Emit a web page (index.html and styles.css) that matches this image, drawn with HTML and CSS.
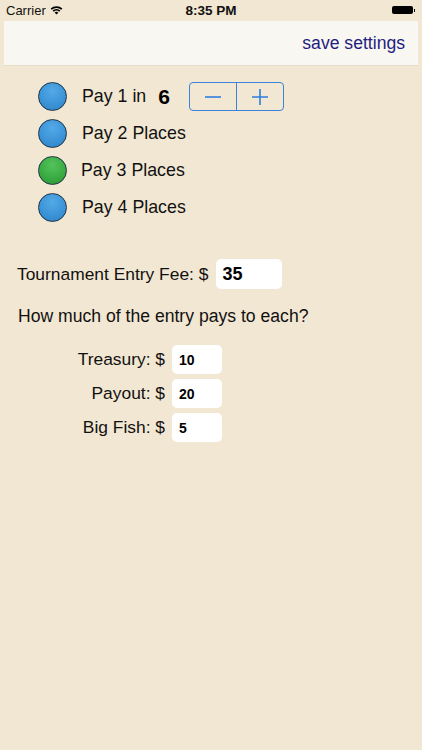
FILE: index.html
```html
<!DOCTYPE html>
<html>
<head>
<meta charset="utf-8">
<link rel="stylesheet" href="styles.css">
</head>
<body>
<div class="screen">
  <div class="status">
    <div class="carrier">Carrier
      <svg class="wifi" width="13" height="10" viewBox="0 0 13 10">
        <path d="M0.6 3.6 A8.5 8.5 0 0 1 12.4 3.6 L11.2 4.8 A6.8 6.8 0 0 0 1.8 4.8 Z" fill="#000"/>
        <path d="M2.6 5.6 A5.6 5.6 0 0 1 10.4 5.6 L9.2 6.8 A3.9 3.9 0 0 0 3.8 6.8 Z" fill="#000"/>
        <path d="M4.6 7.6 A2.7 2.7 0 0 1 8.4 7.6 L6.5 9.6 Z" fill="#000"/>
      </svg>
    </div>
    <div class="time">8:35 PM</div>
    <div class="battery"><span class="cell"></span><span class="nub"></span></div>
  </div>
  <div class="nav">
    <span class="save">save settings</span>
  </div>

  <div class="options">
    <div class="opt">
      <span class="dot blue"></span>
      <span class="opt-label">Pay 1 in</span>
      <span class="count">6</span>
      <div class="stepper">
        <span class="step">
          <svg width="20" height="20" viewBox="0 0 20 20"><path d="M2 10 H18" stroke="#2f7de0" stroke-width="1.6"/></svg>
        </span>
        <span class="step">
          <svg width="20" height="20" viewBox="0 0 20 20"><path d="M2 10 H18 M10 2 V18" stroke="#2f7de0" stroke-width="1.6"/></svg>
        </span>
      </div>
    </div>
    <div class="opt">
      <span class="dot blue"></span>
      <span class="opt-label">Pay 2 Places</span>
    </div>
    <div class="opt">
      <span class="dot green"></span>
      <span class="opt-label shift">Pay 3 Places</span>
    </div>
    <div class="opt">
      <span class="dot blue"></span>
      <span class="opt-label">Pay 4 Places</span>
    </div>
  </div>

  <div class="fee">
    <span class="fee-label">Tournament Entry Fee: $</span>
    <span class="field fee-field">35</span>
  </div>

  <div class="question">How much of the entry pays to each?</div>

  <div class="split">
    <span class="split-label">Treasury: $</span>
    <span class="field small">10</span>
    <span class="split-label">Payout: $</span>
    <span class="field small">20</span>
    <span class="split-label">Big Fish: $</span>
    <span class="field small">5</span>
  </div>
</div>
</body>
</html>
```
FILE: styles.css
```css
html, body {
  margin: 0;
  padding: 0;
}
* {
  box-sizing: border-box;
}
body {
  background: #f2e7d2;
  font-family: "Liberation Sans", Arial, sans-serif;
  color: #111;
}
.screen {
  width: 422px;
  height: 750px;
  background: #f2e7d2;
  overflow: hidden;
}
.status {
  height: 20px;
  display: flex;
  align-items: center;
  justify-content: space-between;
  padding: 0 7px 0 6px;
  font-size: 13px;
  position: relative;
}
.carrier {
  display: flex;
  align-items: center;
  gap: 4px;
  color: #111;
}
.wifi {
  margin-top: -1px;
}
.time {
  position: absolute;
  left: 0;
  right: 0;
  text-align: center;
  font-weight: bold;
  font-size: 13.5px;
  pointer-events: none;
}
.battery {
  display: flex;
  align-items: center;
}
.battery .cell {
  width: 21px;
  height: 8px;
  background: #000;
  border-radius: 2px;
}
.battery .nub {
  width: 1.5px;
  height: 3px;
  background: #000;
  margin-left: 0.5px;
}
.nav {
  margin: 1px 4px 0;
  height: 44px;
  background: #f9f7f2;
  display: flex;
  align-items: center;
  justify-content: flex-end;
  padding-right: 13px;
  box-shadow: 0 1px 0 #e6dcc7;
}
.save {
  font-size: 17.6px;
  color: #1f1d80;
}
.options {
  margin-top: 13px;
  display: flex;
  flex-direction: column;
}
.opt {
  height: 37px;
  display: flex;
  align-items: center;
  padding-left: 38px;
}
.dot {
  width: 29px;
  height: 29px;
  border-radius: 50%;
  border: 1.5px solid #1f3346;
  flex: none;
}
.dot.blue {
  background: radial-gradient(circle at 50% 30%, #54a9e6 0%, #3c95d8 55%, #2d7fc3 100%);
}
.dot.green {
  background: radial-gradient(circle at 50% 30%, #55c25c 0%, #3aac43 55%, #2c8f35 100%);
}
.opt-label {
  font-size: 17.8px;
  margin-left: 15px;
  color: #111;
}
.opt-label.shift {
  margin-left: 14px;
}
.count {
  font-size: 21px;
  font-weight: bold;
  margin-left: 12px;
  color: #000;
}
.stepper {
  margin-left: 19px;
  width: 95px;
  height: 29px;
  border: 1px solid #3b82d9;
  border-radius: 4px;
  display: flex;
}
.step {
  flex: 1;
  display: flex;
  align-items: center;
  justify-content: center;
}
.step + .step {
  border-left: 1px solid #3b82d9;
}
.fee {
  margin-top: 33px;
  height: 30px;
  display: flex;
  align-items: center;
  padding-left: 17px;
}
.fee-label {
  font-size: 17.4px;
}
.field {
  background: #fff;
  border-radius: 5px;
  display: flex;
  align-items: center;
  color: #000;
  font-weight: bold;
}
.fee-field {
  margin-left: 8px;
  width: 66px;
  height: 30px;
  padding-left: 6px;
  font-size: 18px;
}
.question {
  margin-top: 17px;
  padding-left: 18px;
  font-size: 17.6px;
  line-height: 20px;
}
.split {
  margin-top: 19px;
  display: grid;
  grid-template-columns: 165px 50px;
  column-gap: 7px;
  row-gap: 5px;
}
.split-label {
  font-size: 17.4px;
  text-align: right;
  align-self: center;
}
.field.small {
  height: 29px;
  padding-left: 7px;
  font-size: 14px;
}
```
